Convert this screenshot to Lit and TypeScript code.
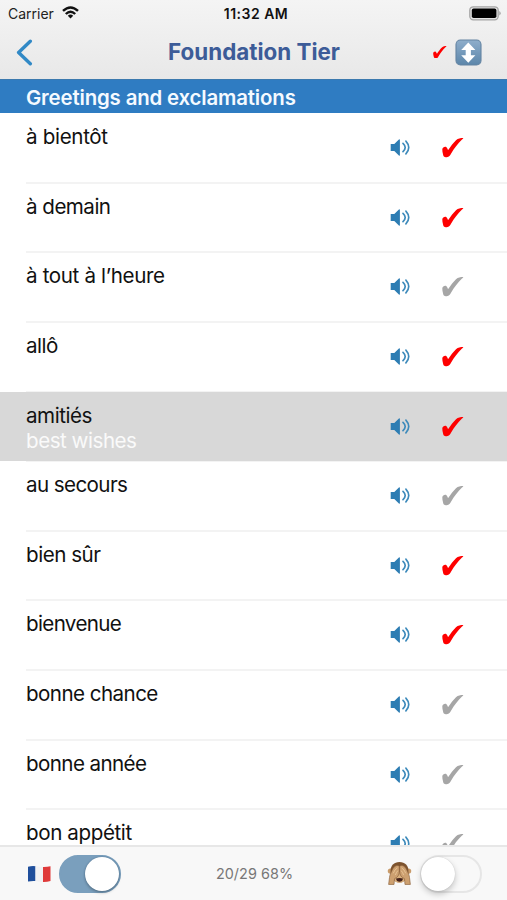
import { LitElement, html, css, svg } from "lit";
import { customElement, property } from "lit/decorators.js";
import { classMap } from "lit/directives/class-map.js";

interface Entry {
  term: string;
  meaning?: string;
  known: boolean;
  spacing: number;
}

const ENTRIES: Entry[] = [
  { term: "à bientôt", known: true, spacing: -0.33 },
  { term: "à demain", known: true, spacing: -0.53 },
  { term: "à tout à l’heure", known: false, spacing: -0.36 },
  { term: "allô", known: true, spacing: -0.48 },
  { term: "amitiés", meaning: "best wishes", known: true, spacing: -0.45 },
  { term: "au secours", known: false, spacing: -0.6 },
  { term: "bien sûr", known: true, spacing: -0.48 },
  { term: "bienvenue", known: true, spacing: -0.65 },
  { term: "bonne chance", known: false, spacing: -0.56 },
  { term: "bonne année", known: false, spacing: -0.6 },
  { term: "bon appétit", known: false, spacing: -0.4 },
];

const tickShape = svg`<path d="M.3 11.2C.5 9.4 2.9 8 4.2 9 5.3 9.9 5.5 11.4 6.2 12.1 8.6 8.5 11.2 4.8 14 2.2 16 .4 18.6 0 21.2 0 21.4 .6 20.6 1 20 1.6 15.7 5.6 12.2 10.6 9 15.8 8 17.5 7.4 19.2 4.7 19.2 1.7 19.2 1.4 18.2 1 16.2.6 14.5.2 12.7.3 11.2Z"/>`;

@customElement("tick-mark")
export class TickMark extends LitElement {
  @property({ type: Boolean }) known = false;
  static styles = css`
    :host { display: block; width: 22px; height: 20px; }
    svg { display: block; width: 100%; height: 100%; fill: #a6a6a6; }
    svg.known { fill: #fe0000; }
  `;
  render() {
    return html`<svg class=${classMap({ known: this.known })} viewBox="0 0 22 20">${tickShape}</svg>`;
  }
}

@customElement("word-row")
export class WordRow extends LitElement {
  @property({ attribute: false }) entry!: Entry;
  static styles = css`
    :host { display: block; height: 69.65px; flex: none; }
    .row { box-sizing: border-box; height: 100%; padding-left: 26px; display: flex; }
    .row.selected { background: #d8d8d8; }
    .inner {
      box-sizing: border-box; flex: 1; display: flex; padding-right: 43px;
      border-top: 1px solid #f3f3f3; border-bottom: 1px solid #f3f3f3;
    }
    :host(:first-child) .inner { border-top-color: transparent; }
    .selected .inner { border-color: transparent; }
    .words { flex: 1; padding-top: 10px; font-size: 20.6px; line-height: 25px; color: #111; white-space: nowrap; }
    .meaning { color: #fafafa; letter-spacing: -0.48px; }
    .speaker { flex: none; width: 21px; height: 19px; margin: 24px 31px 0 0; }
    tick-mark { flex: none; margin-top: 24px; }
  `;
  render() {
    const e = this.entry;
    return html`
      <div class=${classMap({ row: true, selected: !!e.meaning })}>
        <div class="inner">
          <div class="words">
            <div style="letter-spacing:${e.spacing}px">${e.term}</div>
            ${e.meaning ? html`<div class="meaning">${e.meaning}</div>` : null}
          </div>
          <svg class="speaker" viewBox="0 0 21 19">
            <path fill="#2d7db3" d="M.7 6H4.3L8.9 1.4Q9.9 .8 9.9 1.9V17.1Q9.9 18.2 8.9 17.6L4.3 13H.7Z" />
            <g fill="none" stroke="#3d8abb" stroke-linecap="round">
              <path stroke-width="1.7" d="M13 5.3Q17.4 9.5 13 13.7" />
              <path stroke-width="1.6" d="M15.9 3.1Q21.6 9.5 15.9 15.9" />
            </g>
          </svg>
          <tick-mark ?known=${e.known}></tick-mark>
        </div>
      </div>
    `;
  }
}

@customElement("toggle-switch")
export class ToggleSwitch extends LitElement {
  @property({ type: Boolean }) on = false;
  static styles = css`
    :host { display: block; flex: none; }
    .track {
      box-sizing: border-box; width: 62px; height: 38px; border-radius: 19px;
      border: 2px solid #e6e6e6; background: #f8f8f8; display: flex; align-items: center;
    }
    .knob {
      width: 34px; height: 34px; border-radius: 50%; background: #fff; margin-left: -1px;
      box-shadow: 0 3px 6px rgba(0, 0, 0, 0.22), 0 0 1px rgba(0, 0, 0, 0.2);
    }
    .on { background: #7a9fbd; border-color: #7a9fbd; justify-content: flex-end; }
    .on .knob { box-shadow: 0 2px 3px rgba(0, 0, 0, 0.2), 0 0 2px rgba(35, 75, 110, 0.5); }
  `;
  render() {
    return html`<div class=${classMap({ track: true, on: this.on })}><div class="knob"></div></div>`;
  }
}

@customElement("app-root")
export class AppRoot extends LitElement {
  static styles = css`
    :host {
      display: flex; flex-direction: column; width: 507px; height: 900px; overflow: hidden;
      background: #fff; font-family: Inter, "Liberation Sans", sans-serif;
    }
    header { flex: none; height: 79px; background: linear-gradient(#f4f4f4, #e8e8e8); }
    .status {
      height: 27px; display: grid; grid-template-columns: 1fr auto 1fr; align-items: center;
      padding: 0 6px 0 8px; font-size: 14px; color: #222;
    }
    .carrier { display: flex; align-items: center; gap: 8px; }
    .wifi { width: 17px; height: 13px; margin-top: -2px; }
    .clock { font-weight: 600; font-size: 14px; letter-spacing: 0.5px; color: #111; margin-left: 3px; }
    .battery { width: 32px; height: 15px; justify-self: end; }
    .nav {
      height: 50px; display: grid; grid-template-columns: 1fr auto 1fr; align-items: center;
      padding: 0 25px 0 16px;
    }
    .back { width: 17px; height: 27px; }
    h1 { margin: -1px 0 0 10px; font-size: 22.4px; line-height: 28px; font-weight: 700; color: #3d5c98; white-space: nowrap; }
    .actions { display: flex; justify-content: flex-end; align-items: center; gap: 8px; }
    .actions tick-mark { width: 14px; height: 12.7px; }
    .sort { width: 27px; height: 27px; }
    h2 {
      margin: 0; flex: none; height: 34px; box-sizing: border-box; padding: 1px 0 0 26px; background: #2f7cc2;
      border-top: 1px solid #3c79ae; color: #f5faff; font-size: 20.4px; letter-spacing: -0.15px;
      line-height: 33px; font-weight: 600; white-space: nowrap;
    }
    main { flex: 1; min-height: 0; overflow: hidden; display: flex; flex-direction: column; }
    footer {
      flex: none; box-sizing: border-box; height: 55px; border-top: 2px solid #e7e7e7; background: #f8f8f8;
      display: grid; grid-template-columns: 1fr auto 1fr; align-items: center; padding: 0 25px 0 27px;
    }
    .group { display: flex; align-items: center; gap: 8px; }
    .group.end { justify-content: flex-end; }
    .flag { width: 24px; height: 18px; }
    .monkey { width: 25px; height: 25px; }
    .score { font-size: 14.4px; letter-spacing: 0.05px; color: #777; white-space: nowrap; }
  `;

  render() {
    return html`
      <header>
        <div class="status">
          <div class="carrier">
            <span>Carrier</span>
            <svg class="wifi" viewBox="0 0 17 13">
              <g fill="none" stroke="#111" stroke-width="2.4">
                <path d="M1 4.9Q8.5-2.1 16 4.9" />
                <path d="M3.8 8Q8.5 3.5 13.2 8" />
              </g>
              <path fill="#111" d="M5.8 9.8Q8.5 7.4 11.2 9.8L8.5 12.6Z" />
            </svg>
          </div>
          <div class="clock">11:32 AM</div>
          <svg class="battery" viewBox="0 0 32 15">
            <rect x=".8" y=".8" width="28.4" height="13" rx="3.5" fill="#e4e4e4" stroke="#a5a5a5" stroke-width="1.3" />
            <rect x="2.8" y="2.6" width="24.6" height="9.4" rx="1.8" />
            <path d="M30.4 5Q32.8 7.2 30.4 9.6Z" fill="#999" />
          </svg>
        </div>
        <div class="nav">
          <svg class="back" viewBox="0 0 17 27">
            <path d="M14.3 2.3 2.6 13.5 14.3 24.7" fill="none" stroke="#3189c6" stroke-width="3.4" stroke-linecap="round" stroke-linejoin="round" />
          </svg>
          <h1>Foundation Tier</h1>
          <div class="actions">
            <tick-mark known></tick-mark>
            <svg class="sort" viewBox="0 0 27 27">
              <defs>
                <linearGradient id="tile" x1="0" y1="0" x2="0" y2="1">
                  <stop offset="0" stop-color="#8faecb" />
                  <stop offset="1" stop-color="#5c86aa" />
                </linearGradient>
              </defs>
              <rect x="1" y="1" width="25" height="25" rx="4.5" fill="url(#tile)" stroke="#6484a2" stroke-width="1.1" />
              <path fill="#fff" d="M13.3 3.4 20.4 11H15.9V16.2H20.4L13.3 23.8 6.2 16.2H10.7V11H6.2Z" />
            </svg>
          </div>
        </div>
      </header>
      <h2>Greetings and exclamations</h2>
      <main>${ENTRIES.map((entry) => html`<word-row .entry=${entry}></word-row>`)}</main>
      <footer>
        <div class="group">
          <svg class="flag" viewBox="0 0 24 18">
            <path fill="#1f4f9c" d="M1 1.7Q5 .7 8.5 1.2V16Q5 15.6 1 16.5Z" />
            <path fill="#f1f1f3" d="M8.5 1.2Q12 2 16 2V17Q12 16.8 8.5 16Z" />
            <path fill="#df3a3a" d="M16 2Q20 2.1 23.5 1.3V16.1Q20 17.1 16 17Z" />
          </svg>
          <toggle-switch on></toggle-switch>
        </div>
        <div class="score">20/29 68%</div>
        <div class="group end">
          <svg class="monkey" viewBox="0 0 25 26">
            <circle cx="3" cy="10.5" r="2.7" fill="#c99b6a" />
            <circle cx="22" cy="10.5" r="2.7" fill="#c99b6a" />
            <path fill="#7d532e" d="M12.5 1C18.3 1 21.8 4.6 21.8 10.5 21.8 17.5 18.5 22.4 12.5 22.4S3.2 17.5 3.2 10.5C3.2 4.6 6.7 1 12.5 1Z" />
            <ellipse cx="12.5" cy="17" rx="6.8" ry="5.6" fill="#d9b07e" />
            <path fill="#cda070" stroke="#8c633d" stroke-width=".7" d="M12.3 5.4C9.8 3.3 6.3 6 4.8 9.5 3.5 12.5 2.4 14.2 2.1 17.2L1.2 24.4H6.8L7.3 18.4C10.6 17 12.3 14.5 12.3 11Z" />
            <path fill="#cda070" stroke="#8c633d" stroke-width=".7" d="M12.7 5.4C15.2 3.3 18.7 6 20.2 9.5 21.5 12.5 22.6 14.2 22.9 17.2L23.8 24.4H18.2L17.7 18.4C14.4 17 12.7 14.5 12.7 11Z" />
            <path fill="none" stroke="#e6c294" stroke-width="1" d="M10.3 7.1Q7.4 8.8 6 12.8M10.8 10Q9 12 8.2 14.6M14.7 7.1Q17.6 8.8 19 12.8M14.2 10Q16 12 16.8 14.6" />
            <path fill="#42201a" d="M8.9 18.2Q12.5 17.4 16.1 18.2 15.6 21.6 12.5 21.6T8.9 18.2Z" />
          </svg>
          <toggle-switch></toggle-switch>
        </div>
      </footer>
    `;
  }
}
